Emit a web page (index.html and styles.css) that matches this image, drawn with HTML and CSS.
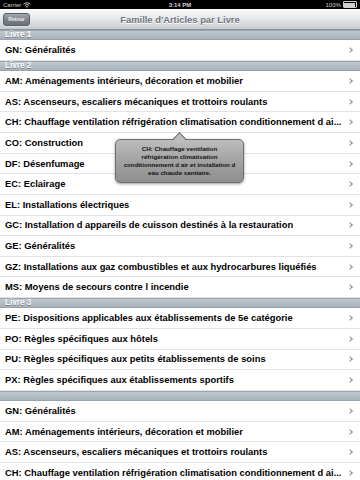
FILE: index.html
```html
<!DOCTYPE html>
<html lang="fr">
<head>
    <meta charset="UTF-8">
    <meta name="viewport" content="width=device-width, initial-scale=1.0">
    <title>Famille d'Articles par Livre</title>
    <link rel="stylesheet" href="styles.css">
</head>
<body>
    <div class="screen">
        <!-- Status bar -->
        <div class="status-bar">
            <div class="status-left">
                Carrier
                <svg class="wifi" width="8" height="6" viewBox="0 0 8 6">
                    <path d="M0.5 2.2 A5 5 0 0 1 7.5 2.2" fill="none" stroke="#d0d0d0" stroke-width="0.9"/>
                    <path d="M1.8 3.4 A3.2 3.2 0 0 1 6.2 3.4" fill="none" stroke="#d0d0d0" stroke-width="0.9"/>
                    <path d="M4 5.8 L2.9 4.6 A1.6 1.6 0 0 1 5.1 4.6 Z" fill="#d0d0d0"/>
                </svg>
            </div>
            <div class="status-time">3:14 PM</div>
            <div class="status-right">
                100%
                <span class="battery"><span class="battery-level"></span></span>
            </div>
        </div>

        <!-- Navigation bar -->
        <div class="nav-bar">
            <button class="back-btn">Retour</button>
            <div class="nav-title">Famille d'Articles par Livre</div>
        </div>

        <!-- Table -->
        <div class="table">
            <div class="section-header">Livre 1</div>
            <div class="row"><span class="label">GN: Généralités</span><span class="chevron"></span></div>

            <div class="section-header">Livre 2</div>
            <div class="row"><span class="label">AM: Aménagements intérieurs, décoration et mobilier</span><span class="chevron"></span></div>
            <div class="row"><span class="label">AS: Ascenseurs, escaliers mécaniques et trottoirs roulants</span><span class="chevron"></span></div>
            <div class="row"><span class="label">CH: Chauffage ventilation réfrigération climatisation conditionnement d ai...</span><span class="chevron"></span></div>
            <div class="row"><span class="label">CO: Construction</span><span class="chevron"></span></div>
            <div class="row"><span class="label">DF: Désenfumage</span><span class="chevron"></span></div>
            <div class="row"><span class="label">EC: Eclairage</span><span class="chevron"></span></div>
            <div class="row"><span class="label">EL: Installations électriques</span><span class="chevron"></span></div>
            <div class="row"><span class="label">GC: Installation d appareils de cuisson destinés à la restauration</span><span class="chevron"></span></div>
            <div class="row"><span class="label">GE: Généralités</span><span class="chevron"></span></div>
            <div class="row"><span class="label">GZ: Installations aux gaz combustibles et aux hydrocarbures liquéfiés</span><span class="chevron"></span></div>
            <div class="row"><span class="label">MS: Moyens de secours contre l incendie</span><span class="chevron"></span></div>

            <div class="section-header">Livre 3</div>
            <div class="row"><span class="label">PE: Dispositions applicables aux établissements de 5e catégorie</span><span class="chevron"></span></div>
            <div class="row"><span class="label">PO: Règles spécifiques aux hôtels</span><span class="chevron"></span></div>
            <div class="row"><span class="label">PU: Règles spécifiques aux petits établissements de soins</span><span class="chevron"></span></div>
            <div class="row"><span class="label">PX: Règles spécifiques aux établissements sportifs</span><span class="chevron"></span></div>

            <div class="section-header"></div>
            <div class="row"><span class="label">GN: Généralités</span><span class="chevron"></span></div>
            <div class="row"><span class="label">AM: Aménagements intérieurs, décoration et mobilier</span><span class="chevron"></span></div>
            <div class="row"><span class="label">AS: Ascenseurs, escaliers mécaniques et trottoirs roulants</span><span class="chevron"></span></div>
            <div class="row"><span class="label">CH: Chauffage ventilation réfrigération climatisation conditionnement d ai...</span><span class="chevron"></span></div>
        </div>

        <!-- Tooltip over the CH row -->
        <div class="tooltip">
            CH: Chauffage ventilation<br>
            réfrigération climatisation<br>
            conditionnement d air et installation d<br>
            eau chaude sanitaire.
        </div>
    </div>
</body>
</html>
```

FILE: styles.css
```css
/* General */
body {
    margin: 0;
    padding: 0;
    background: #fff;
    font-family: "Liberation Sans", Arial, sans-serif;
}
.screen {
    position: relative;
    width: 360px;
    height: 480px;
    overflow: hidden;
}

/* Status bar */
.status-bar {
    height: 9.4px;
    background: #000;
    color: #cfcfcf;
    font-size: 6px;
    display: flex;
    align-items: center;
    justify-content: space-between;
    padding: 0 3px;
}
.status-left, .status-right {
    display: flex;
    align-items: center;
    gap: 2px;
    width: 60px;
}
.status-right {
    justify-content: flex-end;
}
.status-time {
    font-weight: bold;
}
.battery {
    width: 11px;
    height: 4px;
    border: 0.8px solid #cfcfcf;
    border-radius: 1px;
    padding: 0.6px;
    box-sizing: content-box;
    display: flex;
}
.battery-level {
    flex: 1;
    background: #cfcfcf;
}

/* Navigation bar */
.nav-bar {
    position: relative;
    height: 20.6px;
    box-sizing: border-box;
    background: linear-gradient(#fbfbfc, #e4e6e9 50%, #c8ccd1);
    border-bottom: 1px solid #8d939a;
    display: flex;
    align-items: center;
    justify-content: center;
}
.back-btn {
    position: absolute;
    left: 3px;
    top: 3.5px;
    width: 27px;
    height: 13px;
    padding: 0;
    border: 1px solid #5a6068;
    border-radius: 3px;
    background: linear-gradient(#a3a8af, #7b828b 50%, #6a717a);
    color: #f2f2f2;
    font-family: "Liberation Sans", Arial, sans-serif;
    font-size: 5.2px;
    font-weight: bold;
    box-shadow: 0 0.5px 0 rgba(255, 255, 255, 0.6);
}
.nav-title {
    color: #6f767e;
    font-size: 9.4px;
    font-weight: bold;
    text-shadow: 0 1px 0 #fff;
}

/* Table */
.section-header {
    height: 10.3px;
    box-sizing: border-box;
    background: linear-gradient(#c1c8cf, #a8b2bb);
    border-top: 1px solid #9aa4ae;
    border-bottom: 1px solid #98a2ac;
    color: #fff;
    font-size: 8.2px;
    font-weight: bold;
    line-height: 8.3px;
    padding-left: 5px;
    text-shadow: 0 0.5px 0 rgba(80, 90, 100, 0.6);
}
.row {
    height: 20.63px;
    box-sizing: border-box;
    border-bottom: 1px solid #e2e2e2;
    display: flex;
    align-items: center;
    padding: 0 7px 0 5px;
    background: #fff;
}
.label {
    flex: 1;
    min-width: 0;
    white-space: nowrap;
    font-size: 9.375px;
    font-weight: bold;
    color: #000;
}
.chevron {
    width: 3px;
    height: 3px;
    border-top: 1.2px solid #8a8a8a;
    border-right: 1.2px solid #8a8a8a;
    transform: rotate(45deg);
    margin-right: 1px;
}

/* Tooltip */
.tooltip {
    position: absolute;
    left: 115px;
    top: 139px;
    width: 129px;
    height: 44px;
    box-sizing: border-box;
    border: 1px solid #6e6e6e;
    border-radius: 5px;
    background: linear-gradient(#bdbdbd, #a2a2a2 50%, #8f8f8f);
    box-shadow: 0 1px 3px rgba(0, 0, 0, 0.4);
    color: #111;
    font-size: 6.2px;
    font-weight: bold;
    line-height: 8.2px;
    text-align: center;
    padding-top: 4.5px;
}
.tooltip::before {
    content: "";
    position: absolute;
    left: 59px;
    top: -6px;
    width: 8px;
    height: 8px;
    background: #bdbdbd;
    border-left: 1px solid #6e6e6e;
    border-top: 1px solid #6e6e6e;
    transform: rotate(45deg);
}
```
